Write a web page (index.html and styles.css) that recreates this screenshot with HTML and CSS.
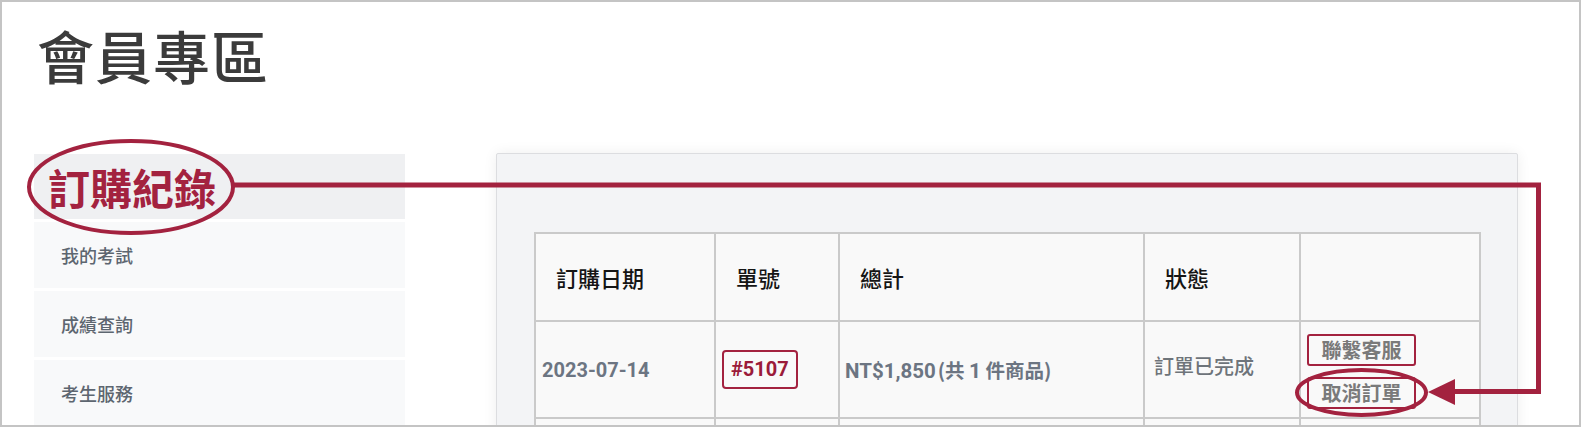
FILE: index.html
```html
<!DOCTYPE html>
<html lang="zh-Hant">
<head>
<meta charset="utf-8">
<title>會員專區</title>
<link rel="stylesheet" href="styles.css">
</head>
<body>
<div class="frame">
  <h1 class="page-title">會員專區</h1>
  <div class="layout">
    <nav class="sidebar">
      <a class="nav-item active">訂購紀錄</a>
      <a class="nav-item">我的考試</a>
      <a class="nav-item">成績查詢</a>
      <a class="nav-item">考生服務</a>
    </nav>
    <main class="card">
      <table class="orders">
        <colgroup>
          <col class="c-date"><col class="c-no"><col class="c-total"><col class="c-status"><col class="c-act">
        </colgroup>
        <thead>
          <tr>
            <th>訂購日期</th>
            <th>單號</th>
            <th>總計</th>
            <th>狀態</th>
            <th></th>
          </tr>
        </thead>
        <tbody>
          <tr>
            <td class="date">2023-07-14</td>
            <td><span class="order-no">#5107</span></td>
            <td class="total"><span class="amount">NT$1,850</span><span class="count">(共 <b>1</b> 件商品)</span></td>
            <td class="status">訂單已完成</td>
            <td class="actions">
              <a class="btn">聯繫客服</a>
              <a class="btn">取消訂單</a>
            </td>
          </tr>
          <tr class="next"><td></td><td></td><td></td><td></td><td></td></tr>
        </tbody>
      </table>
    </main>
  </div>
</div>
<svg class="annotation" width="1581" height="427" viewBox="0 0 1581 427">
  <ellipse cx="131" cy="187" rx="102" ry="46" fill="none" stroke="#a3223f" stroke-width="4"/>
  <path d="M234 185 H1538.5 V391.5 H1450" fill="none" stroke="#a3223f" stroke-width="5"/>
  <polygon points="1428,392 1455,379 1455,405" fill="#a3223f"/>
  <ellipse cx="1361.5" cy="392.5" rx="64.5" ry="22.5" fill="none" stroke="#a3223f" stroke-width="4"/>
</svg>
</body>
</html>
```
FILE: styles.css
```css
* { box-sizing: border-box; }
html, body { margin: 0; padding: 0; background: #fff; }
body {
  position: relative;
  width: 1581px;
  height: 427px;
  overflow: hidden;
  font-family: Roboto, "Noto Sans CJK TC", "Noto Sans", sans-serif;
}
.frame {
  width: 1581px;
  height: 427px;
  border: 2px solid #c4c4c4;
  padding: 0 0 0 32px;
  overflow: hidden;
  background: #fff;
}
.page-title {
  margin: 23px 0 0 3px;
  font-family: "Noto Sans CJK TC", sans-serif;
  font-size: 57px;
  line-height: 58px;
  font-weight: 500;
  color: #3b3b3b;
  letter-spacing: 1px;
}
.layout {
  display: flex;
  align-items: flex-start;
  gap: 91px;
  margin-top: 71px;
}
.sidebar {
  width: 371px;
  flex: none;
  display: flex;
  flex-direction: column;
  gap: 3px;
}
.nav-item {
  display: flex;
  align-items: center;
  height: 66px;
  padding-left: 27px;
  background: #f8f9fa;
  font-family: "Noto Sans CJK TC", sans-serif;
  font-size: 18px;
  font-weight: 500;
  color: #5d6670;
}
.nav-item.active {
  height: 65px;
  padding-left: 14px;
  background: #eff0f2;
  font-size: 42px;
  font-weight: 700;
  color: #a3223f;
  letter-spacing: 0;
}
.card {
  width: 1022px;
  flex: none;
  height: 400px;
  margin-top: -1px;
  padding: 78px 0 0 37px;
  background: #f3f4f6;
  border: 1px solid #dcdde0;
  border-radius: 2px;
  box-shadow: 0 0 14px rgba(0,0,0,0.07);
}
.orders {
  width: 945px;
  table-layout: fixed;
  border-collapse: collapse;
  background: #f9f9f9;
}
.c-date { width: 180px; }
.c-no { width: 124px; }
.c-total { width: 305px; }
.c-status { width: 156px; }
.c-act { width: 180px; }
.orders th, .orders td {
  border: 2px solid #cacaca;
  vertical-align: middle;
  text-align: left;
}
.orders th {
  height: 88px;
  padding: 0 0 0 20px;
  font-family: "Noto Sans CJK TC", sans-serif;
  font-size: 22px;
  font-weight: 500;
  color: #151515;
}
.orders td {
  height: 97px;
  padding: 0 0 0 6px;
  font-size: 20px;
  color: #6c7582;
}
.date {
  font-weight: 700;
  font-size: 20.5px;
}
.order-no {
  display: inline-block;
  padding: 0 7px;
  line-height: 35px;
  border: 2px solid #a3223f;
  border-radius: 4px;
  font-weight: 700;
  color: #9b1b3a;
}
.total { padding-left: 5px !important; }
.amount {
  font-weight: 700;
  font-size: 20.5px;
}
.count {
  font-family: "Noto Sans CJK TC", sans-serif;
  font-weight: 700;
  font-size: 19.5px;
  margin-left: 2px;
}
.count b { font-family: Roboto, sans-serif; font-weight: 700; font-size: 21px; }
.status {
  font-family: "Noto Sans CJK TC", sans-serif;
  font-size: 20px;
  font-weight: 500;
  color: #6e747a !important;
  padding-left: 9px !important;
  padding-bottom: 8px !important;
}
.actions {
  padding-top: 3px !important;
}
.btn {
  display: block;
  width: 109px;
  height: 32px;
  line-height: 28px;
  text-align: center;
  border: 2px solid #a3223f;
  border-radius: 3px;
  font-family: "Noto Sans CJK TC", sans-serif;
  font-size: 20px;
  font-weight: 700;
  color: #7a7a7a;
}
.btn + .btn { margin-top: 11px; }
.next td { height: 60px; }
.annotation {
  position: absolute;
  left: 0;
  top: 0;
  pointer-events: none;
}
```
